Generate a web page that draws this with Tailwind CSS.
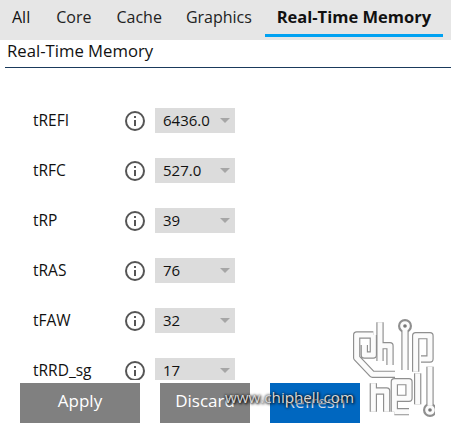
<!DOCTYPE html>
<html lang="en">
  <head>
    <meta charset="UTF-8" />
    <script src="https://cdn.jsdelivr.net/npm/@tailwindcss/browser@4"></script>
    <title>Real-Time Memory</title>
  </head>
  <body class="font-['Open_Sans',sans-serif] text-[#111] bg-white">
    <div class="relative w-[451px] h-[433px] overflow-hidden flex flex-col">
      <nav class="flex h-10 bg-[#e6e6e6] text-[16px] shrink-0">
        <a class="pl-3 pr-[14px] pt-[5px]">All</a>
        <a class="pl-3 pr-[13px] pt-[5px] text-[#222]">Core</a>
        <a class="px-3 pt-[5px] text-[#222]">Cache</a>
        <a class="px-3 pt-[5px] text-[#222]">Graphics</a>
        <a class="ml-[1px] w-[178px] h-[37px] text-center font-bold text-[16.5px] pt-[5px] border-b-[3px] border-[#00a2f2]">Real-Time Memory</a>
      </nav>
      <h2 class="ml-[5px] pl-[2px] h-[28px] border-b border-[#1a3a5c] text-[16.7px] leading-[22px] shrink-0">Real-Time Memory</h2>
      <div class="h-[312px] overflow-hidden pt-[40px] pl-[33px] flex flex-col gap-[25px] text-[15px] shrink-0">
        <div class="flex items-center h-[25px]">
          <span class="w-[91px] text-[15.5px]">tREFI</span>
          <svg class="w-[22px] h-[22px]" viewBox="0 0 22 22" fill="none" stroke="#555" stroke-width="2"><circle cx="11" cy="11" r="9" /><path d="M11 10v6M11 6v2" /></svg>
          <div class="ml-[9px] w-[80px] h-[25px] bg-[#dcdcdc] flex items-center justify-between pl-[8px] pr-[5px]"><span>6436.0</span><svg class="w-[10px] h-[5px]" viewBox="0 0 10 5"><path d="M0 0h10L5 5z" fill="#a6a6a6" /></svg></div>
        </div>
        <div class="flex items-center h-[25px]">
          <span class="w-[91px] text-[15.5px]">tRFC</span>
          <svg class="w-[22px] h-[22px]" viewBox="0 0 22 22" fill="none" stroke="#555" stroke-width="2"><circle cx="11" cy="11" r="9" /><path d="M11 10v6M11 6v2" /></svg>
          <div class="ml-[9px] w-[80px] h-[25px] bg-[#dcdcdc] flex items-center justify-between pl-[8px] pr-[5px]"><span>527.0</span><svg class="w-[10px] h-[5px]" viewBox="0 0 10 5"><path d="M0 0h10L5 5z" fill="#a6a6a6" /></svg></div>
        </div>
        <div class="flex items-center h-[25px]">
          <span class="w-[91px] text-[15.5px]">tRP</span>
          <svg class="w-[22px] h-[22px]" viewBox="0 0 22 22" fill="none" stroke="#555" stroke-width="2"><circle cx="11" cy="11" r="9" /><path d="M11 10v6M11 6v2" /></svg>
          <div class="ml-[9px] w-[80px] h-[25px] bg-[#dcdcdc] flex items-center justify-between pl-[8px] pr-[5px]"><span>39</span><svg class="w-[10px] h-[5px]" viewBox="0 0 10 5"><path d="M0 0h10L5 5z" fill="#a6a6a6" /></svg></div>
        </div>
        <div class="flex items-center h-[25px]">
          <span class="w-[91px] text-[15.5px]">tRAS</span>
          <svg class="w-[22px] h-[22px]" viewBox="0 0 22 22" fill="none" stroke="#555" stroke-width="2"><circle cx="11" cy="11" r="9" /><path d="M11 10v6M11 6v2" /></svg>
          <div class="ml-[9px] w-[80px] h-[25px] bg-[#dcdcdc] flex items-center justify-between pl-[8px] pr-[5px]"><span>76</span><svg class="w-[10px] h-[5px]" viewBox="0 0 10 5"><path d="M0 0h10L5 5z" fill="#a6a6a6" /></svg></div>
        </div>
        <div class="flex items-center h-[25px]">
          <span class="w-[91px] text-[15.5px]">tFAW</span>
          <svg class="w-[22px] h-[22px]" viewBox="0 0 22 22" fill="none" stroke="#555" stroke-width="2"><circle cx="11" cy="11" r="9" /><path d="M11 10v6M11 6v2" /></svg>
          <div class="ml-[9px] w-[80px] h-[25px] bg-[#dcdcdc] flex items-center justify-between pl-[8px] pr-[5px]"><span>32</span><svg class="w-[10px] h-[5px]" viewBox="0 0 10 5"><path d="M0 0h10L5 5z" fill="#a6a6a6" /></svg></div>
        </div>
        <div class="flex items-center h-[25px] shrink-0">
          <span class="w-[91px] text-[15.5px]">tRRD_sg</span>
          <svg class="w-[22px] h-[22px]" viewBox="0 0 22 22" fill="none" stroke="#555" stroke-width="2"><circle cx="11" cy="11" r="9" /><path d="M11 10v6M11 6v2" /></svg>
          <div class="ml-[9px] w-[80px] h-[25px] bg-[#dcdcdc] flex items-center justify-between pl-[8px] pr-[5px]"><span>17</span><svg class="w-[10px] h-[5px]" viewBox="0 0 10 5"><path d="M0 0h10L5 5z" fill="#a6a6a6" /></svg></div>
        </div>
      </div>
      <div class="flex gap-5 pl-5 pt-[3px] text-[17px] text-white">
        <button class="w-[120px] h-10 pb-[4px] bg-[#808080]">Apply</button>
        <button class="w-[90px] h-10 pb-[4px] bg-[#808080]">Discard</button>
        <button class="w-[90px] h-10 pb-[2px] bg-[#0067c0] text-[#cfd8e6]">Refresh</button>
      </div>
      <!-- watermark -->
      <span class="absolute left-[225px] top-[386px] text-[15.2px] text-[#d8d8d8] [text-shadow:1px_1px_3px_#000,0_0_3px_#000]">www.chiphell.com</span>
      <svg class="absolute left-[345px] top-[315px] w-[90px] h-[105px]" viewBox="0 0 270 315" fill="none" stroke-linejoin="round">
        <g stroke="#8f8f8f" stroke-width="22" class="blur-[1px]">
          <path d="M85 60H35V128L82 178H150M85 60V120H58V90" />
          <path d="M105 22V138M105 92H135V150" />
          <path d="M180 45V165" />
          <path d="M212 170V62H255V132H228" />
          <path d="M85 205V290M85 228H125V290" />
          <path d="M148 290V200H192V250H148M148 290H192" />
          <path d="M218 175V268" />
          <path d="M255 155V272" />
          <circle cx="180" cy="33" r="10" />
          <circle cx="255" cy="285" r="10" />
        </g>
        <g stroke="#fbfbfb" stroke-width="15">
          <path d="M85 60H35V128L82 178H150M85 60V120H58V90" />
          <path d="M105 22V138M105 92H135V150" />
          <path d="M180 45V165" />
          <path d="M212 170V62H255V132H228" />
          <path d="M85 205V290M85 228H125V290" />
          <path d="M148 290V200H192V250H148M148 290H192" />
          <path d="M218 175V268" />
          <path d="M255 155V272" />
        </g>
        <g stroke="#fbfbfb" stroke-width="9">
          <circle cx="180" cy="33" r="10" fill="#777" />
          <circle cx="255" cy="285" r="10" fill="#777" />
        </g>
      </svg>
    </div>
  </body>
</html>
